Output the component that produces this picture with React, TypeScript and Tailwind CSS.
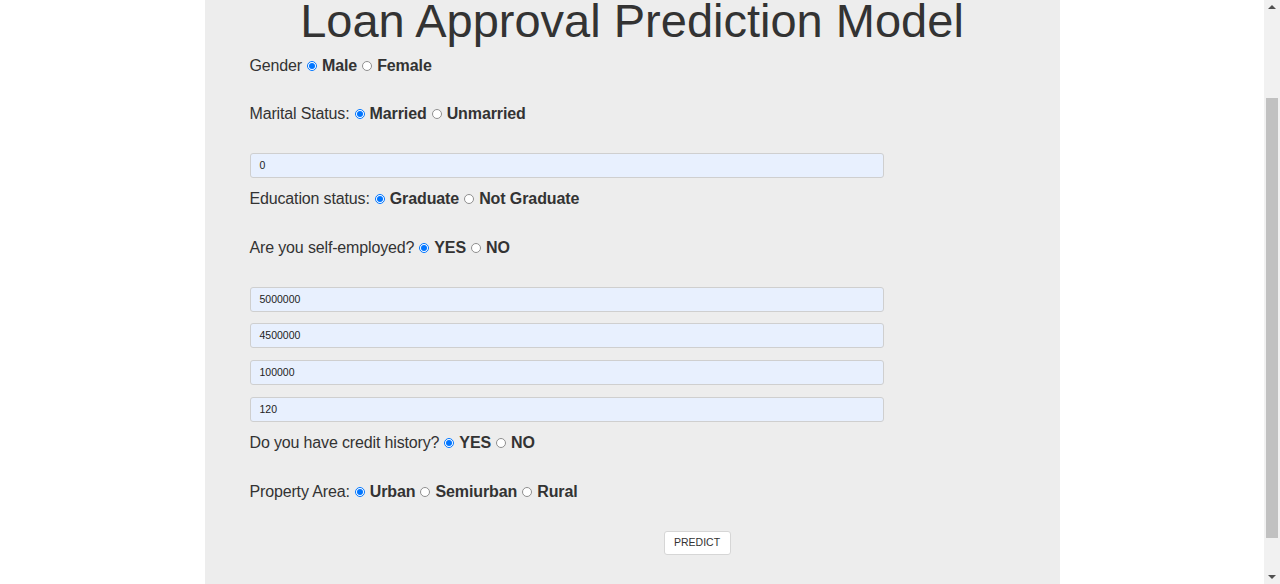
import React from 'react';

const inputs = ['5000000', '4500000', '100000', '120'];

function Radio({ checked }: { checked?: boolean }) {
  if (checked) {
    return (
      <span className="mx-[5px] inline-flex h-[10px] w-[10px] items-center justify-center rounded-full border border-[#0075ff] bg-white">
        <span className="h-[6px] w-[6px] rounded-full bg-[#0075ff]" />
      </span>
    );
  }
  return <span className="mx-[5px] inline-block h-[10px] w-[10px] rounded-full border border-[#8f8f8f] bg-white" />;
}

function Row({ label, options, className }: { label: string; options: string[]; className: string }) {
  return (
    <div className={`flex h-[24px] items-center text-[16px] text-[#333] ${className}`}>
      <span className="tracking-[-0.15px]">{label}</span>
      {options.map((o, i) => (
        <React.Fragment key={o}>
          <Radio checked={i === 0} />
          <b className="font-bold tracking-[-0.1px]">{o}</b>
        </React.Fragment>
      ))}
    </div>
  );
}

function Field({ value, className }: { value: string; className: string }) {
  return (
    <div
      className={`flex h-[25px] w-[634px] items-center rounded-[3px] border border-[#cfcfcf] bg-[#e8f0fe] pl-[9px] text-[10.5px] text-[#222] ${className}`}
    >
      {value}
    </div>
  );
}

export default function App() {
  return (
    <div className="flex h-[584px] overflow-hidden bg-white font-['Liberation_Sans',Arial,sans-serif]">
      <main className="flex-1">
        <div className="mx-auto flex h-[584px] w-[855px] flex-col bg-[#ededed] pl-[45px]">
          <h1 className="-ml-[45px] text-center text-[47px] leading-[42px] text-[#333]">Loan Approval Prediction Model</h1>
          <Row label="Gender" options={['Male', 'Female']} className="mt-[12px]" />
          <Row label="Marital Status:" options={['Married', 'Unmarried']} className="mt-[24px]" />
          <Field value="0" className="mt-[27px]" />
          <Row label="Education status:" options={['Graduate', 'Not Graduate']} className="mt-[9px]" />
          <Row label="Are you self-employed?" options={['YES', 'NO']} className="mt-[25px]" />
          {inputs.map((v, i) => (
            <Field key={v} value={v} className={i === 0 ? 'mt-[27px]' : i === 1 ? 'mt-[11px]' : 'mt-[12px]'} />
          ))}
          <Row label="Do you have credit history?" options={['YES', 'NO']} className="mt-[9px]" />
          <Row label="Property Area:" options={['Urban', 'Semiurban', 'Rural']} className="mt-[25px]" />
          <button className="ml-[414px] mt-[27px] h-[24px] w-[67px] rounded-[3px] border border-[#d6d6d6] bg-white text-[10.5px] text-[#333] uppercase">
            Predict
          </button>
        </div>
      </main>
      <aside className="flex w-[16px] flex-col items-center bg-[#f1f1f1]">
        <svg width="16" height="14" viewBox="0 0 16 14" className="shrink-0">
          <path d="M4 9 L8 5 L12 9 Z" fill="#505050" />
        </svg>
        <div className="mt-[84px] h-[440px] w-[12px] bg-[#c1c1c1]" />
        <div className="flex-1" />
        <svg width="16" height="14" viewBox="0 0 16 14" className="shrink-0">
          <path d="M4 5 L12 5 L8 9 Z" fill="#505050" />
        </svg>
      </aside>
    </div>
  );
}
